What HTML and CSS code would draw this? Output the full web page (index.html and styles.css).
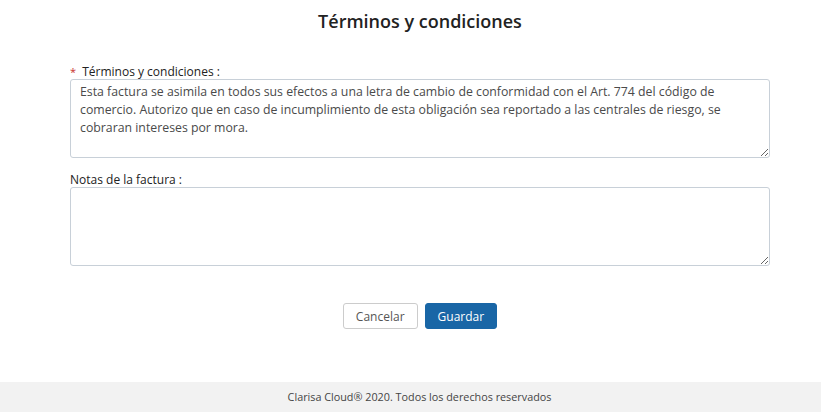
FILE: index.html
```html
<!DOCTYPE html>
<html lang="es">
<head>
<meta charset="utf-8">
<title>Términos y condiciones</title>
<link rel="stylesheet" href="styles.css">
</head>
<body>
<main class="page">
  <h1 class="title">Términos y condiciones</h1>
  <form class="form">
    <div class="field">
      <label class="label"><span class="req">*</span> Términos y condiciones :</label>
      <textarea class="area">Esta factura se asimila en todos sus efectos a una letra de cambio de conformidad con el Art. 774 del código de comercio. Autorizo que en caso de incumplimiento de esta obligación sea reportado a las centrales de riesgo, se cobraran intereses por mora.</textarea>
    </div>
    <div class="field">
      <label class="label">Notas de la factura :</label>
      <textarea class="area"></textarea>
    </div>
    <div class="actions">
      <button type="button" class="btn btn-default">Cancelar</button>
      <button type="button" class="btn btn-primary">Guardar</button>
    </div>
  </form>
</main>
<footer class="footer">Clarisa Cloud® 2020. Todos los derechos reservados</footer>
</body>
</html>
```
FILE: styles.css
```css
* { box-sizing: border-box; }
html, body { margin: 0; padding: 0; }
body {
  font-family: "Open Sans", "Noto Sans", sans-serif;
  color: #333;
  background: #fff;
  height: 412px;
  display: flex;
  flex-direction: column;
  overflow: hidden;
}
.page { flex: 1; padding: 0 51px 0 70px; }
.title {
  margin: 8px 0 0;
  text-align: center;
  font-size: 18px;
  font-weight: 600;
  color: #222;
  line-height: 26px;
}
.form { margin-top: 31px; }
.field { margin-bottom: 15px; }
.label {
  display: block;
  font-size: 12px;
  line-height: 14px;
  color: #222;
}
.req { color: #c9302c; margin-right: 3px; font-size: 11px; }
.area {
  display: block;
  width: 700px;
  height: 79px;
  resize: vertical;
  border: 1px solid #c8d0d8;
  border-radius: 3px;
  padding: 3px 9px;
  font-family: "Open Sans", "Noto Sans", sans-serif;
  font-size: 12.3px;
  line-height: 18px;
  color: #4a4a4a;
}
.actions {
  display: flex;
  justify-content: center;
  gap: 7px;
  margin-top: 37px;
  width: 700px;
}
.btn {
  height: 26px;
  font-family: "Open Sans", "Noto Sans", sans-serif;
  font-size: 12px;
  border-radius: 3px;
  padding: 0 12px;
  cursor: pointer;
}
.btn-default { background: #fff; color: #555; border: 1px solid #ccc; }
.btn-primary { background: #1966a6; color: #fff; border: 1px solid #1966a6; }
.footer {
  height: 30px;
  background: #f2f2f2;
  font-size: 10.8px;
  color: #444;
  text-align: center;
  line-height: 30px;
  padding-left: 18px;
}
```
